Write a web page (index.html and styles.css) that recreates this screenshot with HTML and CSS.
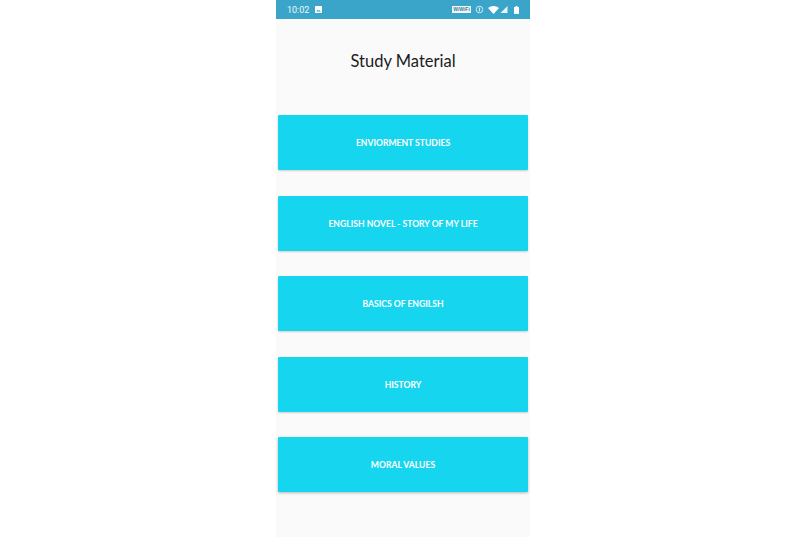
FILE: index.html
```html
<!DOCTYPE html>
<html lang="en">
<head>
<meta charset="utf-8">
<title>Study Material</title>
<link rel="stylesheet" href="styles.css">
</head>
<body>
<main class="phone">
  <header class="status">
    <div class="status-left">
      <span class="time">10:02</span>
      <svg class="ic-image" viewBox="0 0 8 8"><rect width="8" height="8" rx="1" fill="#fff"/><path d="M1.2 6.4 3 4.2l1.2 1.3.8-.8 1.8 1.7z" fill="#3aa5c9"/></svg>
    </div>
    <div class="status-right">
      <span class="volte">W/WiFi</span>
      <svg class="ic-vib" viewBox="0 0 9 9"><circle cx="4.500" cy="4.500" r="3.300" fill="none" stroke="#cfe9f2" stroke-width="1"/><path d="M4.500 2.500v4" stroke="#cfe9f2" stroke-width="1.200"/></svg>
      <svg class="ic-wifi" viewBox="0 0 11 8"><path d="M0 2.100C3.200-.6 7.800-.6 11 2.100L5.500 8z" fill="#fff"/></svg>
      <svg class="ic-signal" viewBox="0 0 7 7"><path d="M7 0v7H0z" fill="#e6f4f8"/></svg>
      <svg class="ic-batt" viewBox="0 0 5 8"><path d="M1.500 0h2v1H5v7H0V1h1.500z" fill="#fff"/></svg>
    </div>
  </header>
  <h1 class="title">Study Material</h1>
  <nav class="list">
    <a class="item">ENVIORMENT STUDIES</a>
    <a class="item">ENGLISH NOVEL - STORY OF MY LIFE</a>
    <a class="item">BASICS OF ENGILSH</a>
    <a class="item">HISTORY</a>
    <a class="item item-last">MORAL VALUES</a>
  </nav>
</main>
</body>
</html>
```

FILE: styles.css
```css
* { box-sizing: border-box; }
html, body { margin: 0; height: 100%; background: #fff; }
body { display: flex; justify-content: center; overflow: hidden; }
.phone {
  width: 254px;
  height: 537px;
  background: #fafafa;
  display: flex;
  flex-direction: column;
  font-family: "Lato", "Open Sans", sans-serif;
}
.status {
  height: 19px;
  flex: none;
  background: #3aa5c9;
  display: flex;
  align-items: center;
  justify-content: space-between;
  padding: 0 11px 0 11px;
  color: #fff;
}
.status-left, .status-right { display: flex; align-items: center; }
.time { font: 9px "Roboto", sans-serif; color: #eef8fb; }
.ic-image { width: 7px; height: 7px; margin-left: 6px; }
.volte {
  width: 19px;
  height: 7px;
  background: #f2f8fa;
  color: #3a7f9a;
  font: bold 5px/7px "Liberation Sans", sans-serif;
  text-align: center;
  overflow: hidden;
}
.ic-vib { width: 9px; height: 9px; margin-left: 4px; }
.ic-wifi { width: 11px; height: 8px; margin-left: 4px; }
.ic-signal { width: 8px; height: 7px; margin-left: 1px; }
.ic-batt { width: 5px; height: 8px; margin-left: 6px; }
.title {
  margin: 31px 0 0;
  height: 22px;
  font: 400 16.500px/22px "Lato", sans-serif;
  color: #1c1c1c;
  text-align: center;
}
.list {
  margin-top: 43px;
  padding: 0 2px;
  display: flex;
  flex-direction: column;
  gap: 25.500px;
}
.item {
  height: 55px;
  flex: none;
  display: flex;
  align-items: center;
  justify-content: center;
  padding-top: 1px;
  background: #16d5ee;
  border-radius: 1px;
  box-shadow: 0 1px 2px rgba(0, 0, 0, .18);
  color: #fff;
  font-size: 8.600px;
  font-weight: 700;
}
.item-last { box-shadow: 0 1px 3px rgba(0, 0, 0, .28); }
```
